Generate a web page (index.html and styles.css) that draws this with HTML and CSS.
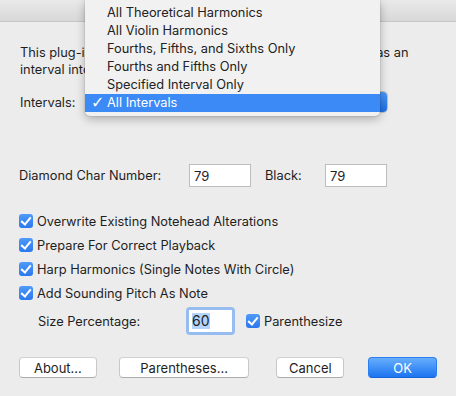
FILE: index.html
```html
<!DOCTYPE html>
<html lang="en">
<head>
    <meta charset="UTF-8">
    <title>Harmonics</title>
    <link rel="stylesheet" href="styles.css">
</head>
<body>
    <div class="window">
        <div class="titlebar"></div>

        <div class="content">
            <p class="desc">This plug-in converts selected notes to harmonic notation, as an<br>interval into a diamond notehead above the stopped pitch.</p>

            <div class="row intervals-row">
                <span class="label">Intervals:</span>
                <div class="popup"><span class="popup-arrow"></span></div>
            </div>

            <div class="row diamond-row">
                <span class="label diamond-label">Diamond Char Number:</span>
                <input class="field" type="text" value="79">
                <span class="label black-label">Black:</span>
                <input class="field" type="text" value="79">
            </div>

            <div class="checks">
                <label class="check-row"><span class="checkbox"></span>Overwrite Existing Notehead Alterations</label>
                <label class="check-row"><span class="checkbox"></span>Prepare For Correct Playback</label>
                <label class="check-row"><span class="checkbox"></span>Harp Harmonics (Single Notes With Circle)</label>
                <label class="check-row"><span class="checkbox"></span>Add Sounding Pitch As Note</label>
            </div>

            <div class="row size-row">
                <span class="label size-label">Size Percentage:</span>
                <div class="focus-ring"><span class="field small-field"><span class="selected">60</span></span></div>
                <label class="check-row inline-check"><span class="checkbox"></span>Parenthesize</label>
            </div>

            <div class="row buttons">
                <button class="btn about">About...</button>
                <button class="btn parens">Parentheses...</button>
                <button class="btn cancel">Cancel</button>
                <button class="btn ok">OK</button>
            </div>
        </div>

        <!-- open popup menu for Intervals -->
        <ul class="menu">
            <li>All Theoretical Harmonics</li>
            <li>All Violin Harmonics</li>
            <li>Fourths, Fifths, and Sixths Only</li>
            <li>Fourths and Fifths Only</li>
            <li>Specified Interval Only</li>
            <li class="active"><span class="tick">&#10003;</span>All Intervals</li>
        </ul>
    </div>
</body>
</html>
```

FILE: styles.css
```css
body {
    margin: 0;
    padding: 0;
    font-family: Inter, "Liberation Sans", Arial, sans-serif;
    font-size: 12.8px;
    color: #1e1e1e;
    background-color: #ececec;
}

.window {
    position: relative;
    width: 456px;
    height: 396px;
    overflow: hidden;
    background-color: #ececec;
}

.titlebar {
    height: 21px;
    background: linear-gradient(#e9e9e9, #d8d8d8);
    border-bottom: 1px solid #c6c6c6;
}

.content {
    padding: 0 19px;
}

.desc {
    margin: 22px 0 0 1px;
    line-height: 17px;
    white-space: nowrap;
}

.row {
    display: flex;
    align-items: center;
}

.label {
    flex: 0 0 auto;
}

/* Intervals popup (mostly hidden under the menu) */
.intervals-row {
    margin-top: 14px;
    height: 20px;
}

.intervals-row .label {
    width: 68px;
    padding-left: 1px;
}

.popup {
    position: relative;
    width: 299px;
    height: 20px;
    background: #fff;
    border-radius: 4px;
    box-shadow: 0 0 0 1px #c0c0c0;
}

.popup-arrow {
    position: absolute;
    right: 0;
    top: 0;
    width: 17px;
    height: 20px;
    border-radius: 0 4px 4px 0;
    background: linear-gradient(#4b97f7, #1c6fe6);
}

/* Diamond char row */
.diamond-row {
    margin-top: 52px;
    height: 23px;
}

.diamond-label {
    width: 170px;
}

.black-label {
    width: 60px;
    margin-left: 14px;
}

.field {
    box-sizing: border-box;
    width: 62px;
    height: 23px;
    padding: 0 0 0 4px;
    border: 1px solid #bdbdbd;
    background: #fff;
    font-family: inherit;
    font-size: 13px;
    color: #1e1e1e;
    outline: none;
}

/* Checkboxes */
.checks {
    margin-top: 22px;
}

.check-row {
    display: flex;
    align-items: center;
    height: 24px;
}

.checkbox {
    position: relative;
    flex: 0 0 auto;
    width: 14px;
    height: 14px;
    margin-right: 4px;
    border-radius: 3px;
    background: linear-gradient(#4f9bf8, #2a78ee);
}

.checkbox::after {
    content: "";
    position: absolute;
    left: 4px;
    top: 1px;
    width: 4px;
    height: 8px;
    border: solid #fff;
    border-width: 0 2px 2px 0;
    transform: rotate(40deg);
}

/* Size percentage row */
.size-row {
    margin-top: 2px;
    height: 28px;
}

.size-label {
    width: 148px;
    padding-left: 19px;
}

.focus-ring {
    padding: 3px;
    border-radius: 4px;
    background: #97bdf0;
}

.small-field {
    display: flex;
    align-items: center;
    width: 43px;
    height: 22px;
    padding-left: 3px;
    border: none;
}

.selected {
    background: #b4d4fb;
    line-height: 16px;
    font-size: 14px;
}

.inline-check {
    margin-left: 11px;
}

/* Buttons */
.buttons {
    margin-top: 22px;
    height: 21px;
}

.btn {
    height: 21px;
    padding: 0;
    border: 1px solid #c8c8c8;
    border-top-color: #d0d0d0;
    border-bottom-color: #acacac;
    border-radius: 4px;
    background: #fff;
    font-family: inherit;
    font-size: 13px;
    color: #1e1e1e;
}

.about {
    width: 78px;
}

.parens {
    width: 131px;
    margin-left: 22px;
}

.cancel {
    width: 68px;
    margin-left: 27px;
}

.ok {
    width: 69px;
    margin-left: 24px;
    border-color: #2a7ff0;
    border-bottom-color: #1863d8;
    background: linear-gradient(#67aefc, #1c74f1);
    color: #fff;
}

/* Open popup menu */
.menu {
    position: absolute;
    left: 85px;
    top: 0;
    width: 295px;
    margin: 0;
    padding: 4px 0 4px 0;
    list-style: none;
    background: #f1f1f1;
    border-radius: 0 0 5px 5px;
    box-shadow: 0 3px 10px rgba(0, 0, 0, 0.28), 0 0 0 1px rgba(0, 0, 0, 0.06);
}

.menu li {
    position: relative;
    height: 18px;
    line-height: 18px;
    padding-left: 22px;
    font-size: 12.8px;
    color: #222;
}

.menu li.active {
    background: #3b8af6;
    color: #fff;
}

.tick {
    position: absolute;
    left: 6px;
    top: 0;
    font-size: 16px;
    font-weight: bold;
    font-family: "DejaVu Sans", sans-serif;
}
```
